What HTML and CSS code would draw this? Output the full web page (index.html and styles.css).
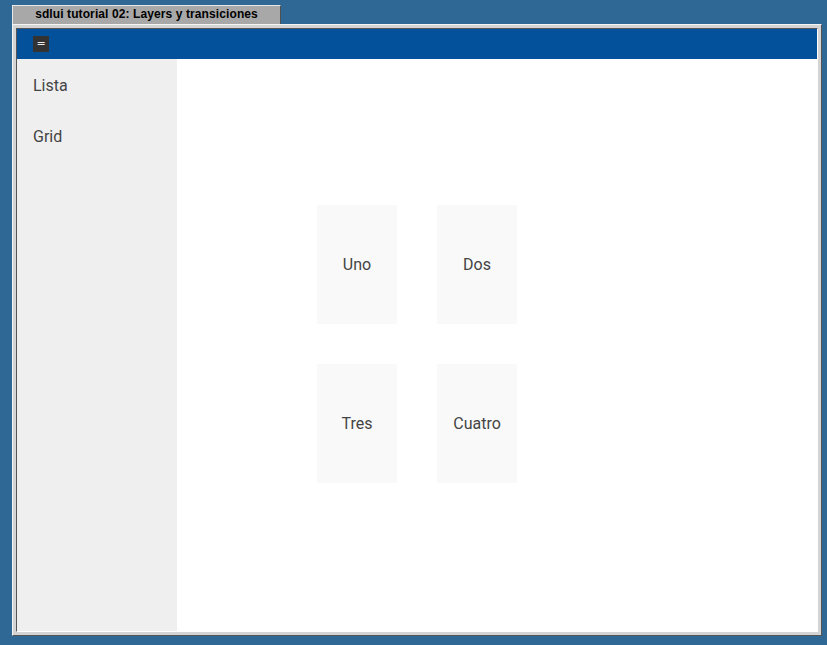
FILE: index.html
```html
<!DOCTYPE html>
<html lang="en">
<head>
    <meta charset="UTF-8">
    <title>sdlui tutorial 02: Layers y transiciones</title>
    <link rel="stylesheet" href="styles.css">
</head>
<body>
    <div class="window">
        <div class="window-tab">sdlui tutorial 02: Layers y transiciones</div>
        <div class="window-frame">
            <div class="app">
                <div class="app-header">
                    <button class="menu-btn">=</button>
                </div>
                <div class="app-body">
                    <div class="sidebar">
                        <div class="nav-item">Lista</div>
                        <div class="nav-item">Grid</div>
                    </div>
                    <div class="main">
                        <div class="card-grid">
                            <div class="card">Uno</div>
                            <div class="card">Dos</div>
                            <div class="card">Tres</div>
                            <div class="card">Cuatro</div>
                        </div>
                    </div>
                </div>
            </div>
        </div>
    </div>
</body>
</html>
```
FILE: styles.css
```css
* {
    margin: 0;
    padding: 0;
    box-sizing: border-box;
}

body {
    background: #2f6795;
    width: 827px;
    height: 645px;
    overflow: hidden;
    font-family: Roboto, 'Noto Sans', sans-serif;
}

.window {
    padding: 5px 0 0 12px;
}

.window-tab {
    width: 269px;
    height: 19px;
    background: #a8a8a8;
    border-top: 1px solid #e8e8e8;
    border-left: 1px solid #e8e8e8;
    border-right: 1px solid #505050;
    font-family: 'Liberation Sans', Arial, sans-serif;
    font-weight: bold;
    font-size: 12px;
    letter-spacing: 0.1px;
    line-height: 17px;
    text-align: center;
    color: #000;
}

.window-frame {
    width: 810px;
    background: #d4d4d4;
    border-top: 1px solid #f4f4f4;
    border-left: 1px solid #f4f4f4;
    border-right: 1px solid #555;
    border-bottom: 1px solid #555;
    padding: 3px;
}

.app {
    width: 802px;
    height: 604px;
    border-top: 1px solid #555;
    border-left: 1px solid #555;
    border-right: 1px solid #fff;
    border-bottom: 1px solid #fff;
    display: flex;
    flex-direction: column;
}

.app-header {
    height: 30px;
    background: #03519b;
    display: flex;
    align-items: center;
    padding-left: 16px;
}

.menu-btn {
    width: 16px;
    height: 16px;
    background: #333;
    color: #eee;
    border: none;
    font-family: 'DejaVu Sans', sans-serif;
    font-size: 11px;
    line-height: 16px;
    text-align: center;
}

.app-body {
    flex: 1;
    display: flex;
}

.sidebar {
    width: 160px;
    background: #efefef;
    padding-top: 1px;
}

.nav-item {
    height: 51px;
    line-height: 51px;
    padding-left: 16px;
    font-size: 16px;
    color: #444;
}

.main {
    flex: 1;
    background: #fff;
    padding: 146px 0 0 140px;
}

.card-grid {
    display: grid;
    grid-template-columns: 80px 80px;
    grid-auto-rows: 119px;
    gap: 40px;
}

.card {
    background: #f9f9f9;
    display: flex;
    align-items: center;
    justify-content: center;
    font-size: 16px;
    color: #444;
}
```
